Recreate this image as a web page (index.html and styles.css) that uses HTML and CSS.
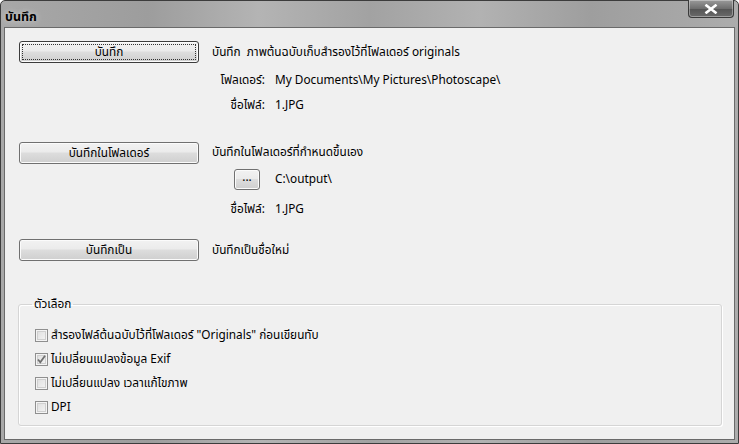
FILE: index.html
```html
<!DOCTYPE html>
<html lang="th">
<head>
    <meta charset="UTF-8">
    <title>บันทึก</title>
    <link rel="stylesheet" href="styles.css">
</head>
<body>
    <div class="window">
        <div class="titlebar">
            <span class="title">บันทึก</span>
            <button class="close" aria-label="close">
                <svg width="14" height="10" viewBox="0 0 14 10">
                    <path d="M2.5 1.5 L11.5 8.5 M11.5 1.5 L2.5 8.5" stroke="#fff" stroke-width="2.6" stroke-linecap="square"/>
                </svg>
            </button>
        </div>

        <div class="client">
            <div class="row row-1">
                <button class="btn btn-wide focused">บันทึก</button>
                <span class="desc">บันทึก&nbsp; ภาพต้นฉบับเก็บสำรองไว้ที่โฟลเดอร์ originals</span>
            </div>
            <div class="row row-2 detail">
                <span class="label">โฟลเดอร์:</span>
                <span class="value">My Documents\My Pictures\Photoscape\</span>
            </div>
            <div class="row row-3 detail">
                <span class="label">ชื่อไฟล์:</span>
                <span class="value">1.JPG</span>
            </div>

            <div class="row row-4">
                <button class="btn btn-wide">บันทึกในโฟลเดอร์</button>
                <span class="desc">บันทึกในโฟลเดอร์ที่กำหนดขึ้นเอง</span>
            </div>
            <div class="row row-5 detail">
                <span class="label"><button class="btn btn-small">...</button></span>
                <span class="value">C:\output\</span>
            </div>
            <div class="row row-6 detail">
                <span class="label">ชื่อไฟล์:</span>
                <span class="value">1.JPG</span>
            </div>

            <div class="row row-7">
                <button class="btn btn-wide">บันทึกเป็น</button>
                <span class="desc">บันทึกเป็นชื่อใหม่</span>
            </div>

            <fieldset class="options">
                <legend>ตัวเลือก</legend>
                <label class="check"><span class="box"></span>สำรองไฟล์ต้นฉบับไว้ที่โฟลเดอร์ "Originals" ก่อนเขียนทับ</label>
                <label class="check"><span class="box checked">
                    <svg width="11" height="11" viewBox="0 0 11 11">
                        <path d="M2 5.5 L4.3 8.3 L9 1.8" fill="none" stroke="#6f6f6f" stroke-width="1.8"/>
                    </svg>
                </span>ไม่เปลี่ยนแปลงข้อมูล Exif</label>
                <label class="check"><span class="box"></span>ไม่เปลี่ยนแปลง เวลาแก้ไขภาพ</label>
                <label class="check"><span class="box"></span>DPI</label>
            </fieldset>
        </div>
    </div>
</body>
</html>
```

FILE: styles.css
```css
* {
    box-sizing: border-box;
}

body {
    margin: 0;
    width: 739px;
    height: 444px;
    overflow: hidden;
    background: #ffffff;
    font-family: Tahoma, "Noto Sans Thai", "DejaVu Sans", sans-serif;
    font-size: 11.8px;
    color: #000;
}

.window {
    width: 739px;
    height: 444px;
    border: 1px solid #3c3c3c;
    border-radius: 5px 5px 0 0;
    background: linear-gradient(90deg, #a8a8a8 0%, #9d9d9d 20%, #b4b4b4 35%, #a2a2a2 50%, #b2b2b2 65%, #9e9e9e 80%, #acacac 100%);
    padding: 0 3px 3px 3px;
    display: flex;
    flex-direction: column;
}

.titlebar {
    height: 26px;
    display: flex;
    align-items: flex-start;
    justify-content: space-between;
}

.title {
    font-weight: bold;
    font-size: 12.5px;
    margin: 7px 0 0 1px;
    text-shadow: 0 0 6px rgba(255, 255, 255, 0.6);
}

.close {
    width: 46px;
    height: 18px;
    margin: -1px 1px 0 0;
    border: 1px solid #3a3a3a;
    border-top: none;
    border-radius: 0 0 4px 4px;
    background: linear-gradient(#9a9a9a, #6e6e6e 50%, #555 55%, #6a6a6a);
    box-shadow: inset 0 0 0 1px rgba(255, 255, 255, 0.35);
    display: flex;
    align-items: center;
    justify-content: center;
    padding: 0;
}

.client {
    flex: 1;
    background: #f0f0f0;
    border: 1px solid #6a6a6a;
    padding: 13px 12px 0 13px;
}

.row {
    display: flex;
    align-items: center;
    height: 22px;
}

.row-2 { margin-top: 6px; }
.row-3 { margin-top: 3px; }
.row-4 { margin-top: 26px; }
.row-5 { margin-top: 4px; }
.row-6 { margin-top: 8px; }
.row-7 { margin-top: 19px; }

.btn {
    font: inherit;
    color: #000;
    height: 22px;
    border: 1px solid #707070;
    border-radius: 3px;
    background: linear-gradient(#f2f2f2 0%, #ebebeb 45%, #dddddd 50%, #cfcfcf 100%);
    box-shadow: inset 0 0 0 1px #fbfbfb;
    padding: 0;
}

.btn-wide {
    width: 180px;
    margin-left: 1px;
}

.btn.focused {
    outline: 1px dotted #333;
    outline-offset: -4px;
    border-color: #3c3c3c;
}

.btn-small {
    width: 26px;
    height: 21px;
    line-height: 14px;
    padding-bottom: 4px;
    margin-right: 5px;
}

.desc {
    margin-left: 13px;
}

.row-4 .desc {
    margin-top: -3px;
}

.detail .label {
    width: 247px;
    text-align: right;
}

.detail .value {
    margin-left: 10px;
}

.options {
    margin: 34px 0 0 0;
    border: 1px solid #d5d5d5;
    border-radius: 3px;
    box-shadow: 1px 1px 0 #ffffff, inset 1px 1px 0 #ffffff;
    padding: 10px 0 4px 16px;
    height: 131px;
}

.options legend {
    padding: 0 2px;
    margin-left: -3px;
}

.check {
    display: flex;
    align-items: center;
    height: 24px;
}

.box {
    width: 13px;
    height: 13px;
    border: 1px solid #8f8f8f;
    background: linear-gradient(135deg, #dcdcdc, #f6f6f6);
    box-shadow: inset 0 0 0 1px #f4f4f4, inset 0 0 0 2px #cfcfcf;
    margin-right: 3px;
    display: flex;
    align-items: center;
    justify-content: center;
}
```
